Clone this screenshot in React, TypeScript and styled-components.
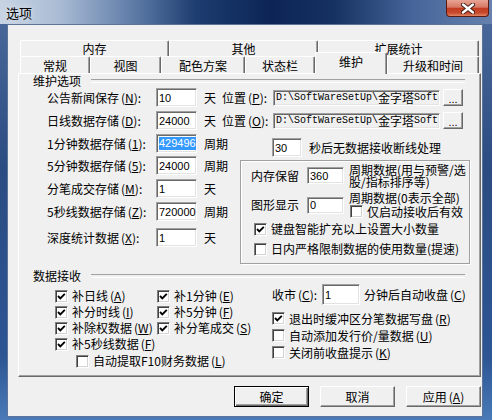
import React from "react"
import styled, { createGlobalStyle } from "styled-components"

const UI = `"Noto Sans CJK SC", "Liberation Sans", sans-serif`

const GlobalStyle = createGlobalStyle`
  html, body { margin: 0; padding: 0; }
  body { background: #ffffff; font-family: ${UI}; font-size: 12px; color: #000; }
  * { box-sizing: border-box; }
`

const Window = styled.div`
  width: 492px;
  height: 420px;
  display: flex;
  flex-direction: column;
  background: linear-gradient(180deg, #4d6c9c 0%, #2b4c82 40%, #2d5594 85%, #4a7ab8 100%);
  overflow: hidden;
`

const TitleBar = styled.div`
  height: 24px;
  flex: none;
  display: flex;
  align-items: flex-start;
  background: linear-gradient(
    90deg,
    #c8d4e4 0%,
    #aabcd4 12%,
    #5f7ca8 27%,
    #1d3c6f 40%,
    #0c2556 55%,
    #163262 68%,
    #47659a 84%,
    #6681ad 100%
  );
`

const Title = styled.div`
  font-size: 13px;
  line-height: 13px;
  margin: 6px 0 0 6px;
  color: #000;
  text-shadow: 0 0 6px rgba(255, 255, 255, 0.8);
`

const CloseButton = styled.div`
  margin-left: auto;
  margin-right: 3px;
  width: 43px;
  height: 17px;
  border: 1px solid #5a1b12;
  border-top: none;
  border-radius: 0 0 4px 4px;
  background: linear-gradient(180deg, #e9a595 0%, #d67865 45%, #c33c22 52%, #c84a2e 80%, #e28561 100%);
  display: flex;
  align-items: center;
  justify-content: center;
`

const Client = styled.div`
  flex: 1;
  margin: 0 9px 3px 7px;
  background: #f0f0f0;
  border: 1px solid #5d7398;
  display: flex;
  flex-direction: column;
  padding: 15px 1px 0 10px;
`

const TabStrip = styled.div`
  display: flex;
  flex-direction: column;
  padding: 0 2px;
`

const TabRow = styled.div<{ $h: number }>`
  display: flex;
  height: ${(p) => p.$h}px;
`

const Tab = styled.div<{ $w: number; $active?: boolean }>`
  width: ${(p) => p.$w}px;
  flex: none;
  ${(p) => (p.$active ? "height: 22px; margin-top: -4px;" : "height: 100%;")}
  position: relative;
  z-index: ${(p) => (p.$active ? 2 : 0)};
  background: #f0f0f0;
  border-top: 1px solid #ffffff;
  border-left: 1px solid #ffffff;
  border-right: 1px solid #696969;
  box-shadow: inset -1px 0 0 #a0a0a0;
  border-radius: 2px 2px 0 0;
  display: flex;
  align-items: ${(p) => (p.$active ? "flex-start" : "center")};
  padding-top: ${(p) => (p.$active ? 3 : 1)}px;
  justify-content: center;
  line-height: 12px;
  white-space: nowrap;
`

const Panel = styled.div`
  height: 304px;
  border: 1px solid;
  border-color: #ffffff #696969 #696969 #ffffff;
  box-shadow: inset -1px -1px 0 #a0a0a0;
  padding: 0 14px;
  display: flex;
  flex-direction: column;
`

const GroupTitle = styled.div<{ $mt: number }>`
  display: flex;
  align-items: center;
  height: 12px;
  line-height: 12px;
  margin-top: ${(p) => p.$mt}px;
  white-space: nowrap;

  &::after {
    content: "";
    flex: 1;
    margin: 0 1px 0 10px;
    height: 2px;
    border-top: 1px solid #a0a0a0;
    border-bottom: 1px solid #ffffff;
  }
`

const Fields = styled.div`
  display: flex;
  flex-direction: column;
  padding-left: 14px;
  margin-top: 1px;
`

const FieldRow = styled.div<{ $mt?: number }>`
  display: flex;
  align-items: center;
  height: 19px;
  margin-top: ${(p) => p.$mt ?? 0}px;
  white-space: nowrap;
  line-height: 12px;
`

const FieldLabel = styled.div<{ $w: number }>`
  width: ${(p) => p.$w}px;
  flex: none;
`

const KeyWrap = styled.span`
  margin-left: 2px;
  & u {
    text-underline-offset: 1px;
  }
`

const Key = ({ k }: { k: string }) => (
  <KeyWrap>
    (<u>{k}</u>)
  </KeyWrap>
)

const TextBox = styled.div<{ $w: number; $h?: number }>`
  width: ${(p) => p.$w}px;
  height: ${(p) => p.$h ?? 19}px;
  flex: none;
  background: #ffffff;
  border: 1px solid;
  border-color: #a0a0a0 #ffffff #ffffff #a0a0a0;
  box-shadow: inset 1px 1px 0 #696969, inset -1px -1px 0 #e3e3e3;
  font-family: "Liberation Sans", sans-serif;
  font-size: 11px;
  padding: 0 2px;
  display: flex;
  align-items: center;
`

const Selected = styled.span`
  background: #3399ff;
  color: #ffffff;
  line-height: 13px;
`

const Unit = styled.div<{ $ml: number; $w?: number }>`
  margin-left: ${(p) => p.$ml}px;
  ${(p) => (p.$w ? `width: ${p.$w}px; flex: none;` : "")}
`

const PathBox = styled.div`
  width: 167px;
  height: 16px;
  flex: none;
  background: #f0f0f0;
  border: 1px solid;
  border-color: #a0a0a0 #ffffff #ffffff #a0a0a0;
  box-shadow: inset 1px 1px 0 #696969, inset -1px -1px 0 #e3e3e3;
  font-family: "Liberation Mono", monospace;
  font-size: 10px;
  padding: 0 2px;
  overflow: hidden;
  display: flex;
  align-items: center;
`

const Cjk = styled.span`
  font-family: ${UI};
  font-size: 12px;
`

const ClassicButton = styled.div<{ $default?: boolean }>`
  background: #f0f0f0;
  border: 1px solid;
  border-color: ${(p) => (p.$default ? "#000000" : "#ffffff #696969 #696969 #ffffff")};
  box-shadow: ${(p) =>
    p.$default
      ? "inset 1px 1px 0 #ffffff, inset -1px -1px 0 #696969, inset -2px -2px 0 #a0a0a0"
      : "inset -1px -1px 0 #a0a0a0"};
  display: flex;
  align-items: center;
  justify-content: center;
  line-height: 12px;
  flex: none;
`

const Browse = styled(ClassicButton)`
  width: 20px;
  height: 17px;
  margin-left: 3px;
  font-family: "Liberation Sans", sans-serif;
  font-size: 11px;
  padding-top: 3px;
`

const Split = styled.div`
  display: flex;
  margin-top: 4px;
`

const LeftCol = styled.div`
  width: 193px;
  flex: none;
  display: flex;
  flex-direction: column;
`

const RightCol = styled.div`
  display: flex;
  flex-direction: column;
`

const InnerBox = styled.div`
  margin-top: 3px;
  width: 230px;
  height: 104px;
  border: 1px solid #a0a0a0;
  box-shadow: inset 1px 1px 0 #ffffff, 1px 1px 0 #ffffff;
  padding: 3px 0 0 10px;
  display: flex;
  flex-direction: column;
  line-height: 12px;
`

const InnerRow = styled.div<{ $mt: number; $align: string }>`
  display: flex;
  align-items: ${(p) => p.$align};
  margin-top: ${(p) => p.$mt}px;
  white-space: nowrap;
`

const InnerLabel = styled.div<{ $mt?: number }>`
  width: 56px;
  flex: none;
  margin-top: ${(p) => p.$mt ?? 0}px;
`

const Desc = styled.div<{ $lh: number }>`
  line-height: ${(p) => p.$lh}px;
`

const DescCol = styled.div`
  margin-left: 5px;
  display: flex;
  flex-direction: column;
`

const CheckRow = styled.div<{ $h: number; $ml?: number }>`
  display: flex;
  align-items: center;
  height: ${(p) => p.$h}px;
  margin-left: ${(p) => p.$ml ?? 0}px;
  white-space: nowrap;
  line-height: 12px;
`

const Box = styled.div`
  width: 13px;
  height: 13px;
  flex: none;
  background: #ffffff;
  border: 1px solid;
  border-color: #808080 #ffffff #ffffff #808080;
  box-shadow: inset 1px 1px 0 #404040, inset -1px -1px 0 #d4d4d4;
  margin-right: 4px;
  display: flex;
  align-items: center;
  justify-content: center;
`

const Check = ({ on, label, h, ml }: { on?: boolean; label: React.ReactNode; h: number; ml?: number }) => (
  <CheckRow $h={h} $ml={ml}>
    <Box>
      {on && (
        <svg width="9" height="9" viewBox="0 0 9 9">
          <path d="M1 4 L3.3 6.3 L7.8 1.8" stroke="#000" strokeWidth="1.9" fill="none" />
        </svg>
      )}
    </Box>
    <span>{label}</span>
  </CheckRow>
)

const Receive = styled.div`
  display: flex;
  align-items: flex-start;
  padding-left: 22px;
`

const ReceiveLeft = styled.div`
  width: 217px;
  flex: none;
  margin-top: 6px;
  display: flex;
  flex-direction: column;
`

const CheckGrid = styled.div`
  display: grid;
  grid-template-columns: 102px auto;
  grid-auto-rows: 16px;
`

const ReceiveRight = styled.div`
  margin-top: 2px;
  display: flex;
  flex-direction: column;
`

const CloseRow = styled.div`
  display: flex;
  align-items: center;
  height: 21px;
  margin-bottom: 5px;
  white-space: nowrap;
  line-height: 12px;
`

const ButtonBar = styled.div`
  display: flex;
  justify-content: flex-end;
  gap: 11px;
  margin-top: 9px;
`

const DialogButton = styled(ClassicButton)`
  width: 75px;
  height: 21px;
`

export default function App() {
  return (
    <>
      <GlobalStyle />
      <Window>
        <TitleBar>
          <Title>选项</Title>
          <CloseButton>
            <svg width="14" height="11" viewBox="0 0 14 11">
              <path d="M2 1.5 L12 9.5 M12 1.5 L2 9.5" stroke="#3b1a14" strokeWidth="4.2" strokeLinecap="round" />
              <path d="M2 1.5 L12 9.5 M12 1.5 L2 9.5" stroke="#ffffff" strokeWidth="2.4" strokeLinecap="round" />
            </svg>
          </CloseButton>
        </TitleBar>
        <Client>
          <TabStrip>
            <TabRow $h={16}>
              <Tab $w={149}>内存</Tab>
              <Tab $w={149}>其他</Tab>
              <Tab $w={161}>扩展统计</Tab>
            </TabRow>
            <TabRow $h={17}>
              <Tab $w={70}>常规</Tab>
              <Tab $w={71}>视图</Tab>
              <Tab $w={84}>配色方案</Tab>
              <Tab $w={70}>状态栏</Tab>
              <Tab $w={72} $active>
                维护
              </Tab>
              <Tab $w={92}>升级和时间</Tab>
            </TabRow>
          </TabStrip>
          <Panel>
            <GroupTitle $mt={1}>维护选项</GroupTitle>
            <Fields>
              <FieldRow>
                <FieldLabel $w={109}>
                  公告新闻保存<Key k="N" />:
                </FieldLabel>
                <TextBox $w={41}>10</TextBox>
                <Unit $ml={7}>天</Unit>
                <Unit $ml={6} $w={51}>
                  位置<Key k="P" />:
                </Unit>
                <PathBox>
                  D:\SoftWareSetUp\<Cjk>金字塔</Cjk>Soft
                </PathBox>
                <Browse>...</Browse>
              </FieldRow>
              <FieldRow $mt={4}>
                <FieldLabel $w={109}>
                  日线数据存储<Key k="D" />:
                </FieldLabel>
                <TextBox $w={41}>24000</TextBox>
                <Unit $ml={7}>天</Unit>
                <Unit $ml={6} $w={51}>
                  位置<Key k="O" />:
                </Unit>
                <PathBox>
                  D:\SoftWareSetUp\<Cjk>金字塔</Cjk>Soft
                </PathBox>
                <Browse>...</Browse>
              </FieldRow>
              <Split>
                <LeftCol>
                  <FieldRow>
                    <FieldLabel $w={109}>
                      1分钟数据存储<Key k="1" />:
                    </FieldLabel>
                    <TextBox $w={41}>
                      <Selected>429496</Selected>
                    </TextBox>
                    <Unit $ml={7}>周期</Unit>
                  </FieldRow>
                  <FieldRow $mt={3}>
                    <FieldLabel $w={109}>
                      5分钟数据存储<Key k="5" />:
                    </FieldLabel>
                    <TextBox $w={41}>24000</TextBox>
                    <Unit $ml={7}>周期</Unit>
                  </FieldRow>
                  <FieldRow $mt={4}>
                    <FieldLabel $w={109}>
                      分笔成交存储<Key k="M" />:
                    </FieldLabel>
                    <TextBox $w={41}>1</TextBox>
                    <Unit $ml={7}>天</Unit>
                  </FieldRow>
                  <FieldRow $mt={4}>
                    <FieldLabel $w={109}>
                      5秒线数据存储<Key k="Z" />:
                    </FieldLabel>
                    <TextBox $w={41}>720000</TextBox>
                    <Unit $ml={7}>周期</Unit>
                  </FieldRow>
                  <FieldRow $mt={7}>
                    <FieldLabel $w={109}>
                      深度统计数据<Key k="X" />:
                    </FieldLabel>
                    <TextBox $w={41}>1</TextBox>
                    <Unit $ml={7}>天</Unit>
                  </FieldRow>
                </LeftCol>
                <RightCol>
                  <FieldRow $mt={4}>
                    <Unit $ml={32} />
                    <TextBox $w={30}>30</TextBox>
                    <Unit $ml={7}>秒后无数据接收断线处理</Unit>
                  </FieldRow>
                  <InnerBox>
                    <InnerRow $mt={0} $align="flex-start">
                      <InnerLabel $mt={6}>内存保留</InnerLabel>
                      <TextBox $w={37} $h={17} style={{ marginTop: 3 }}>
                        360
                      </TextBox>
                      <DescCol>
                        <Desc $lh={12}>周期数据(用与预警/选</Desc>
                        <Desc $lh={12}>股/指标排序等)</Desc>
                      </DescCol>
                    </InnerRow>
                    <InnerRow $mt={3} $align="center">
                      <InnerLabel>图形显示</InnerLabel>
                      <TextBox $w={37} $h={17}>
                        0
                      </TextBox>
                      <DescCol>
                        <Desc $lh={13}>周期数据(0表示全部)</Desc>
                        <Check h={15} ml={1} label="仅启动接收后有效" />
                      </DescCol>
                    </InnerRow>
                    <Check on h={20} ml={3} label="键盘智能扩充以上设置大小数量" />
                    <Check h={20} ml={3} label="日内严格限制数据的使用数量(提速)" />
                  </InnerBox>
                </RightCol>
              </Split>
            </Fields>
            <GroupTitle $mt={6}>数据接收</GroupTitle>
            <Receive>
              <ReceiveLeft>
                <CheckGrid>
                  <Check on h={16} label={<>补日线<Key k="A" /></>} />
                  <Check on h={16} label={<>补1分钟<Key k="E" /></>} />
                  <Check on h={16} label={<>补分时线<Key k="I" /></>} />
                  <Check on h={16} label={<>补5分钟<Key k="F" /></>} />
                  <Check on h={16} label={<>补除权数据<Key k="W" /></>} />
                  <Check on h={16} label={<>补分笔成交<Key k="S" /></>} />
                  <Check on h={16} label={<>补5秒线数据<Key k="F" /></>} />
                </CheckGrid>
                <Check h={18} ml={21} label={<>自动提取F10财务数据<Key k="L" /></>} />
              </ReceiveLeft>
              <ReceiveRight>
                <CloseRow>
                  <FieldLabel $w={50}>
                    收市<Key k="C" />:
                  </FieldLabel>
                  <TextBox $w={38} $h={21}>
                    1
                  </TextBox>
                  <Unit $ml={4}>
                    分钟后自动收盘<Key k="C" />
                  </Unit>
                </CloseRow>
                <Check on h={17} label={<>退出时缓冲区分笔数据写盘<Key k="R" /></>} />
                <Check h={17} label={<>自动添加发行价/量数据<Key k="U" /></>} />
                <Check h={17} label={<>关闭前收盘提示<Key k="K" /></>} />
              </ReceiveRight>
            </Receive>
          </Panel>
          <ButtonBar>
            <DialogButton $default>确定</DialogButton>
            <DialogButton>取消</DialogButton>
            <DialogButton>
              应用<Key k="A" />
            </DialogButton>
          </ButtonBar>
        </Client>
      </Window>
    </>
  )
}
